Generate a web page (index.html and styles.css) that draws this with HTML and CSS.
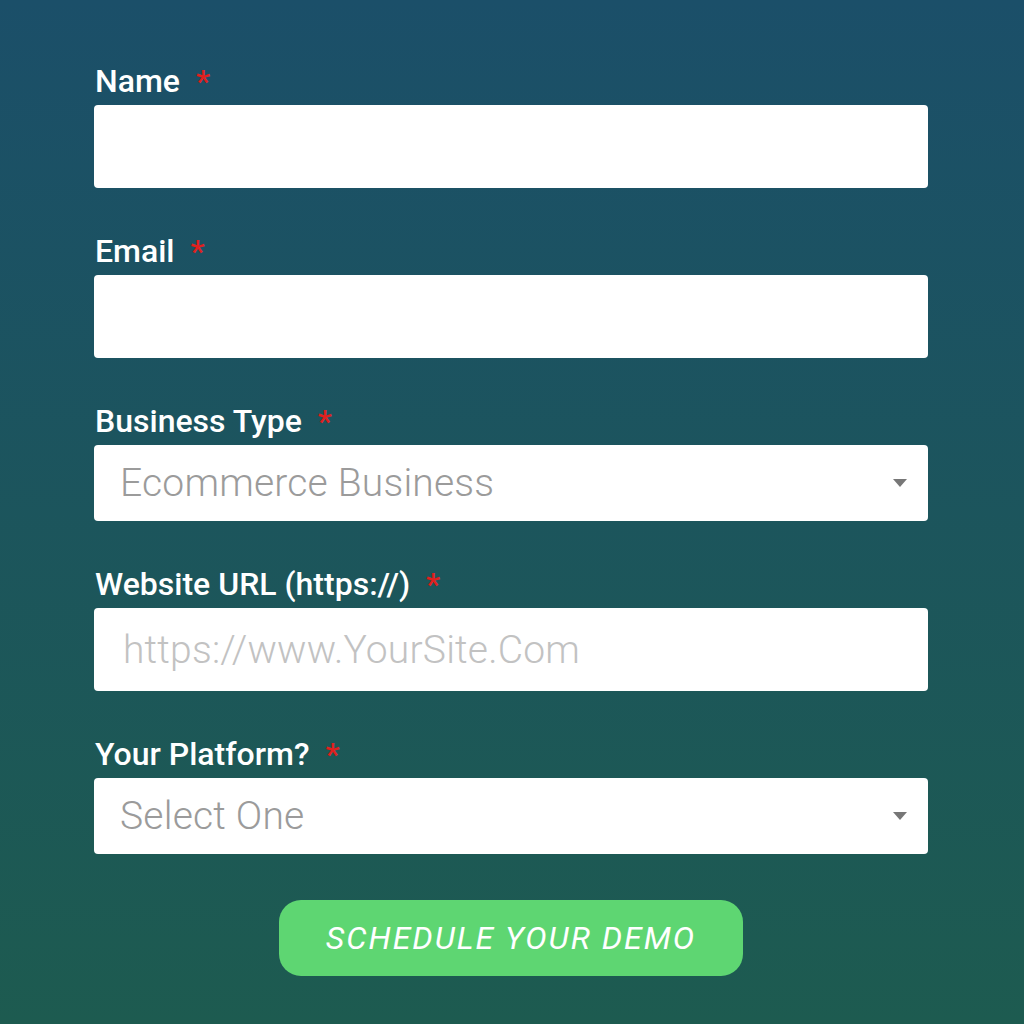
FILE: index.html
```html
<!DOCTYPE html>
<html lang="en">
<head>
    <meta charset="UTF-8">
    <meta name="viewport" content="width=device-width, initial-scale=1.0">
    <link rel="stylesheet" href="styles.css">
    <title>Schedule Your Demo</title>
</head>
<body>
    <form class="demo-form">
        <div class="field">
            <label>Name <span class="req">*</span></label>
            <input type="text" class="box">
        </div>
        <div class="field">
            <label>Email <span class="req">*</span></label>
            <input type="email" class="box">
        </div>
        <div class="field">
            <label>Business Type <span class="req">*</span></label>
            <div class="select-wrap">
                <select class="box pick">
                    <option selected>Ecommerce Business</option>
                    <option>Agency</option>
                    <option>Other</option>
                </select>
                <svg class="arrow" width="14" height="8" viewBox="0 0 14 8"><path d="M0 0 H14 L7 8 Z" fill="#777"/></svg>
            </div>
        </div>
        <div class="field">
            <label>Website URL (https://) <span class="req">*</span></label>
            <input type="text" class="box" placeholder="https://www.YourSite.Com">
        </div>
        <div class="field">
            <label>Your Platform? <span class="req">*</span></label>
            <div class="select-wrap">
                <select class="box pick">
                    <option selected>Select One</option>
                    <option>Shopify</option>
                    <option>WooCommerce</option>
                    <option>Magento</option>
                </select>
                <svg class="arrow" width="14" height="8" viewBox="0 0 14 8"><path d="M0 0 H14 L7 8 Z" fill="#777"/></svg>
            </div>
        </div>
        <div class="actions">
            <button type="button">Schedule Your Demo</button>
        </div>
    </form>
</body>
</html>
```

FILE: styles.css
```css
*{
    margin: 0px;
    padding: 0px;
    box-sizing: border-box;
    font-family: Roboto, 'Liberation Sans', sans-serif;
}

body{
    min-height: 100vh;
    background: linear-gradient(to bottom, #1b4f69, #1d5b50);
}

.demo-form{
    width: 834px;
    margin-left: 94px;
    padding-top: 61px;
    display: flex;
    flex-direction: column;
}

.field{
    display: flex;
    flex-direction: column;
    margin-bottom: 43px;
}

.field label{
    color: #fff;
    font-size: 32px;
    font-weight: 500;
    line-height: 40px;
    height: 40px;
    margin-bottom: 4px;
    padding-left: 1px;
}

.field .req{
    color: #e0201e;
    margin-left: 8px;
}

.box{
    width: 100%;
    height: 83px;
    border: none;
    outline: none;
    border-radius: 4px;
    background: #fff;
    padding: 0 29px;
    font-size: 39px;
    font-weight: 300;
    letter-spacing: 0.2px;
    color: #999;
}

.box::placeholder{
    color: #c2c2c2;
}

.select-wrap{
    position: relative;
}

.box.pick{
    height: 76px;
    appearance: none;
    -webkit-appearance: none;
    padding-left: 26px;
    color: #9b9b9b;
}

.select-wrap .arrow{
    position: absolute;
    right: 21px;
    top: 34px;
    pointer-events: none;
}

.actions{
    display: flex;
    justify-content: center;
    margin-top: 3px;
}

.actions button{
    width: 464px;
    height: 76px;
    border: none;
    outline: none;
    cursor: pointer;
    border-radius: 22px;
    background: #5ed672;
    color: #fff;
    font-size: 32px;
    font-style: italic;
    text-transform: uppercase;
    letter-spacing: 2px;
}
```
